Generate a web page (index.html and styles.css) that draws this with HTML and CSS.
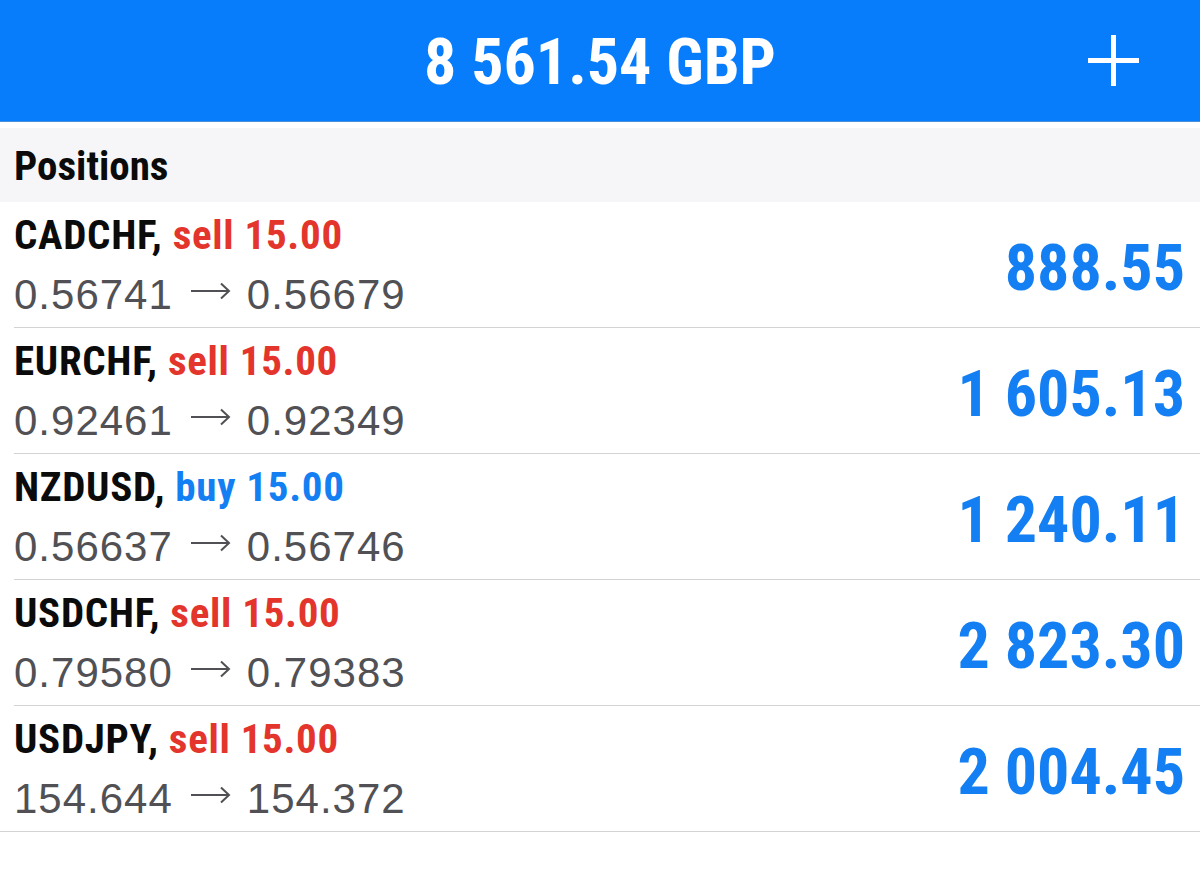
FILE: index.html
```html
<!DOCTYPE html>
<html lang="en">
<head>
  <meta charset="UTF-8">
  <title>Trade</title>
  <link rel="stylesheet" href="styles.css">
</head>
<body>

<header class="topbar">
  <div></div>
  <h1 class="balance">8 561.54 GBP</h1>
  <button class="add" aria-label="New order">
    <svg width="51" height="51" viewBox="0 0 51 51">
      <rect x="23" y="0" width="5" height="51" fill="#fff"/>
      <rect x="0" y="23" width="51" height="5" fill="#fff"/>
    </svg>
  </button>
</header>

<h2 class="section">Positions</h2>

<div class="list">
  <div class="pos">
    <div class="info">
      <div class="title">CADCHF, <span class="sell">sell 15.00</span></div>
      <div class="prices">0.56741<svg class="arrow" width="40" height="18" viewBox="0 0 40 18"><path d="M0 9H38M30 1.5L38 9L30 16.5" fill="none" stroke="#515155" stroke-width="2"/></svg>0.56679</div>
    </div>
    <div class="profit">888.55</div>
  </div>
  <div class="pos">
    <div class="info">
      <div class="title">EURCHF, <span class="sell">sell 15.00</span></div>
      <div class="prices">0.92461<svg class="arrow" width="40" height="18" viewBox="0 0 40 18"><path d="M0 9H38M30 1.5L38 9L30 16.5" fill="none" stroke="#515155" stroke-width="2"/></svg>0.92349</div>
    </div>
    <div class="profit">1 605.13</div>
  </div>
  <div class="pos">
    <div class="info">
      <div class="title">NZDUSD, <span class="buy">buy 15.00</span></div>
      <div class="prices">0.56637<svg class="arrow" width="40" height="18" viewBox="0 0 40 18"><path d="M0 9H38M30 1.5L38 9L30 16.5" fill="none" stroke="#515155" stroke-width="2"/></svg>0.56746</div>
    </div>
    <div class="profit">1 240.11</div>
  </div>
  <div class="pos">
    <div class="info">
      <div class="title">USDCHF, <span class="sell">sell 15.00</span></div>
      <div class="prices">0.79580<svg class="arrow" width="40" height="18" viewBox="0 0 40 18"><path d="M0 9H38M30 1.5L38 9L30 16.5" fill="none" stroke="#515155" stroke-width="2"/></svg>0.79383</div>
    </div>
    <div class="profit">2 823.30</div>
  </div>
  <div class="pos">
    <div class="info">
      <div class="title">USDJPY, <span class="sell">sell 15.00</span></div>
      <div class="prices">154.644<svg class="arrow" width="40" height="18" viewBox="0 0 40 18"><path d="M0 9H38M30 1.5L38 9L30 16.5" fill="none" stroke="#515155" stroke-width="2"/></svg>154.372</div>
    </div>
    <div class="profit">2 004.45</div>
  </div>
</div>

</body>
</html>
```

FILE: styles.css
```css
body { margin:0; background:#fff; font-family:"Liberation Sans", Arial, sans-serif; }

.topbar { display:grid; grid-template-columns:1fr auto 1fr; align-items:center; height:121px; background:#087dfc; border-bottom:1px solid #4b8fda; }
.balance { margin:0; padding-top:4px; color:#fff; font-family:"Roboto Condensed", "Liberation Sans Narrow", "Liberation Sans", sans-serif; font-weight:700; font-size:64px; line-height:117px; }
.add { justify-self:end; margin-right:61px; padding:0; border:0; background:none; display:flex; cursor:pointer; }

.section { margin:6px 0 0; height:72px; padding:2px 0 0 14px; background:#f6f6f8; color:#0b0b0b; font-family:"Roboto Condensed", "Liberation Sans Narrow", "Liberation Sans", sans-serif; font-weight:700; font-size:41px; line-height:72px; }

.list { padding-left:14px; border-bottom:1px solid #d3d3d6; }
.pos { display:flex; align-items:center; justify-content:space-between; padding:3px 15px 2px 0; border-bottom:1px solid #d3d3d6; }
.pos:last-child { border-bottom:0; }

.title { color:#0b0b0b; font-family:"Roboto Condensed", "Liberation Sans Narrow", "Liberation Sans", sans-serif; font-weight:700; font-size:41px; letter-spacing:0.7px; line-height:60px; white-space:nowrap; }
.sell { color:#e3352b; }
.buy { color:#147ff2; }
.prices { color:#515155; font-size:42px; letter-spacing:1px; line-height:60px; white-space:nowrap; }
.arrow { margin:0 16px 0 18px; vertical-align:9px; }

.profit { margin-top:6px; color:#147ff2; font-family:"Roboto Condensed", "Liberation Sans Narrow", "Liberation Sans", sans-serif; font-weight:700; font-size:64px; line-height:65px; }
```
